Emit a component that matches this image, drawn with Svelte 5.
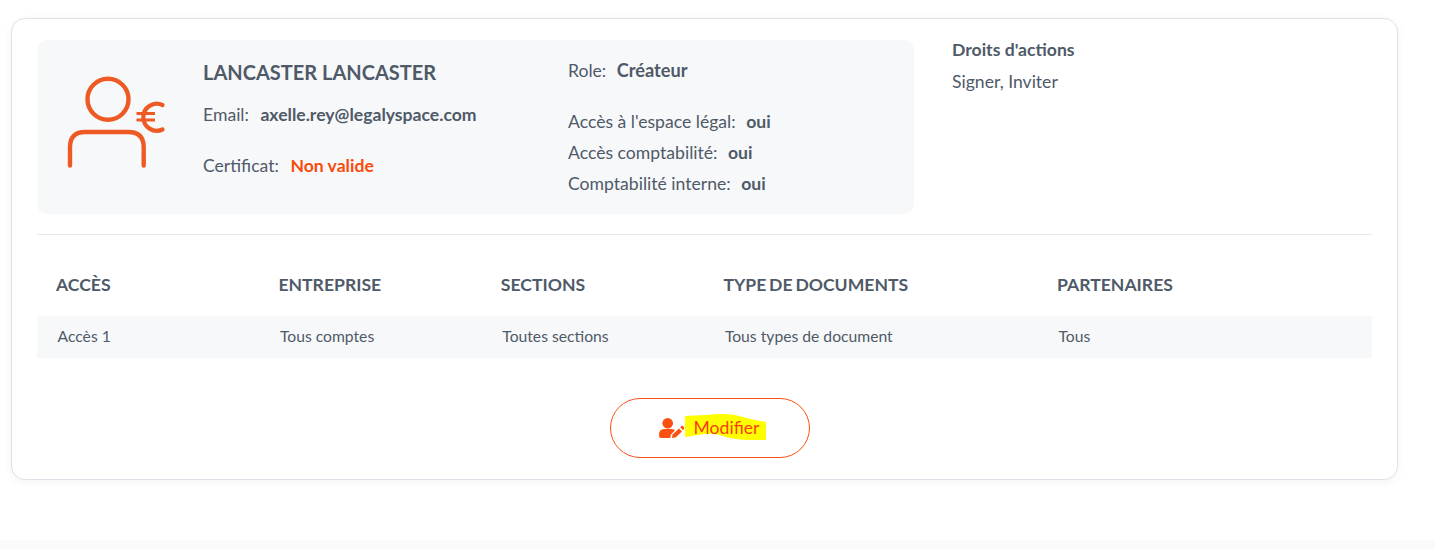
<script>
  const columns = [
    { title: 'ACCÈS', value: 'Accès 1' },
    { title: 'ENTREPRISE', value: 'Tous comptes' },
    { title: 'SECTIONS', value: 'Toutes sections' },
    { title: 'TYPE DE DOCUMENTS', value: 'Tous types de document' },
    { title: 'PARTENAIRES', value: 'Tous' }
  ];
</script>

<div class="page">
  <section class="card">
    <div class="top">
      <div class="panel">
        <svg class="avatar" width="100" height="96" viewBox="0 0 100 96" fill="none" stroke="#ee5a24" stroke-width="4.4" stroke-linecap="round">
          <circle cx="55" cy="24.3" r="20.5" />
          <path d="M17 90.5 V72 Q17 57 32 57 H75 Q90.7 57 90.7 72 V90.5" />
          <path stroke-width="4.2" d="M109.5 30 A13.5 13.5 0 1 0 109.5 54.5" />
          <path stroke-width="3" stroke-linecap="butt" d="M83.5 38.5 H102 M83.5 45 H102" />
        </svg>
        <div class="col-a">
          <h2>LANCASTER LANCASTER</h2>
          <p class="email">Email: <b>axelle.rey@legalyspace.com</b></p>
          <p class="cert">Certificat: <b class="bad">Non valide</b></p>
        </div>
        <div class="col-b">
          <p class="role">Role: <b>Créateur</b></p>
          <p>Accès à l'espace légal: <b>oui</b></p>
          <p>Accès comptabilité: <b>oui</b></p>
          <p>Comptabilité interne: <b>oui</b></p>
        </div>
      </div>
      <div class="rights">
        <h3>Droits d'actions</h3>
        <p>Signer, Inviter</p>
      </div>
    </div>

    <div class="table">
      <div class="thead">
        {#each columns as c}<div>{c.title}</div>{/each}
      </div>
      <div class="tbody">
        {#each columns as c}<div>{c.value}</div>{/each}
      </div>
    </div>

    <div class="actions">
      <button type="button">
        <svg width="26" height="20" viewBox="0 0 26 20" fill="#fb5012">
          <circle cx="8.7" cy="5.3" r="5.3" />
          <path d="M0 17 Q0 11 5 11 H12 Q14.5 11 16 12.2 L12 16.5 L11.2 20 H2 Q0 20 0 17 Z" />
          <path d="M13.5 16.5 L20 10.5 L23 13.5 L16.5 19.6 L13 20 Z" />
          <path d="M21.2 9.3 L22.5 8 Q23.2 7.5 24 8 L25 9 Q25.6 9.8 25 10.6 L24 12.2 Z" />
        </svg>
        <span class="label">
          <svg class="marker" width="81" height="26" viewBox="0 0 81 26" preserveAspectRatio="none">
            <path d="M0 2 L20 1 Q40 -1 50 1 Q64 5 81 8 V26 H62 Q46 25 38 22 Q28 19 20 20 L0 23 Z" fill="#ffff00" />
          </svg>
          <span class="text">Modifier</span>
        </span>
      </button>
    </div>
  </section>
  <div class="footer"></div>
</div>

<style>
  :global(body) {
    margin: 0;
    background: #fff;
    font-family: Lato, "Liberation Sans", sans-serif;
    color: #4f5a68;
  }
  .page {
    height: 549px;
    box-sizing: border-box;
    padding-top: 18px;
    position: relative;
    overflow: hidden;
    display: flex;
    flex-direction: column;
  }
  .card {
    box-sizing: border-box;
    width: 1387px;
    height: 462px;
    margin-left: 11px;
    padding: 21px 25px 0;
    background: #fff;
    border: 1px solid #dfe1ea;
    border-radius: 14px;
    box-shadow: 0 2px 8px rgba(60, 60, 90, 0.06);
  }
  .top {
    display: flex;
    height: 194px;
    border-bottom: 1px solid #e6e8ec;
    box-sizing: content-box;
  }
  .panel {
    width: 877px;
    height: 174px;
    background: #f7f8fa;
    border-radius: 10px;
    display: flex;
    flex: none;
  }
  .avatar {
    flex: none;
    margin: 35px 0 0 16px;
    overflow: visible;
  }
  p, h2, h3 { margin: 0; font-weight: 400; }
  b { font-weight: 700; margin-left: 6px; }
  .col-a {
    width: 365px;
    margin-left: 50px;
    font-size: 17.6px;
  }
  .col-a b { margin-left: 7px; }
  h2 {
    font-size: 20px;
    font-weight: 700;
    line-height: 24px;
    margin-top: 20px;
  }
  .email { margin-top: 19px; line-height: 24px; }
  .cert { margin-top: 27px; line-height: 24px; }
  .bad { color: #fb4a0a; }
  .col-b { font-size: 17.6px; }
  .col-b p { line-height: 31px; }
  .col-b .role { margin-top: 15px; margin-bottom: 20px; }
  .col-b .role b { font-size: 18.2px; }
  .rights {
    margin: -1px 0 0 38px;
    font-size: 17.6px;
  }
  h3 {
    font-size: 17.6px;
    font-weight: 700;
    line-height: 22px;
  }
  .rights p { margin-top: 10px; line-height: 22px; }
  .thead, .tbody {
    display: grid;
    grid-template-columns: 222.4px 222.4px 222.6px 333.6px 1fr;
  }
  .thead {
    height: 81px;
    align-items: center;
    padding-left: 19px;
    padding-top: 18px;
    box-sizing: border-box;
    font-size: 17.6px;
    font-weight: 700;
    word-spacing: -1.5px;
  }
  .tbody {
    height: 42px;
    box-sizing: border-box;
    align-items: center;
    padding: 0 0 3px 20.5px;
    background: #f7f8fa;
    font-size: 15.7px;
  }
  .actions {
    display: flex;
    justify-content: center;
    margin-top: 40px;
    margin-left: 10px;
  }
  button {
    width: 200px;
    height: 60px;
    box-sizing: border-box;
    background: #fff;
    border: 1px solid #fb5012;
    border-radius: 30px;
    display: flex;
    align-items: center;
    justify-content: center;
    gap: 7px;
    padding: 0 0 0 8px;
    font-family: inherit;
    cursor: pointer;
  }
  .label {
    position: relative;
    display: inline-block;
    font-size: 17.6px;
    color: #fb3d14;
    line-height: 24px;
    padding: 0 9px 0 2px;
  }
  .marker { position: absolute; left: -7px; top: -2px; }
  .text { position: relative; }
  .footer {
    position: absolute;
    left: 0;
    right: 0;
    bottom: 0;
    height: 9px;
    background: #f9fafa;
  }
</style>
